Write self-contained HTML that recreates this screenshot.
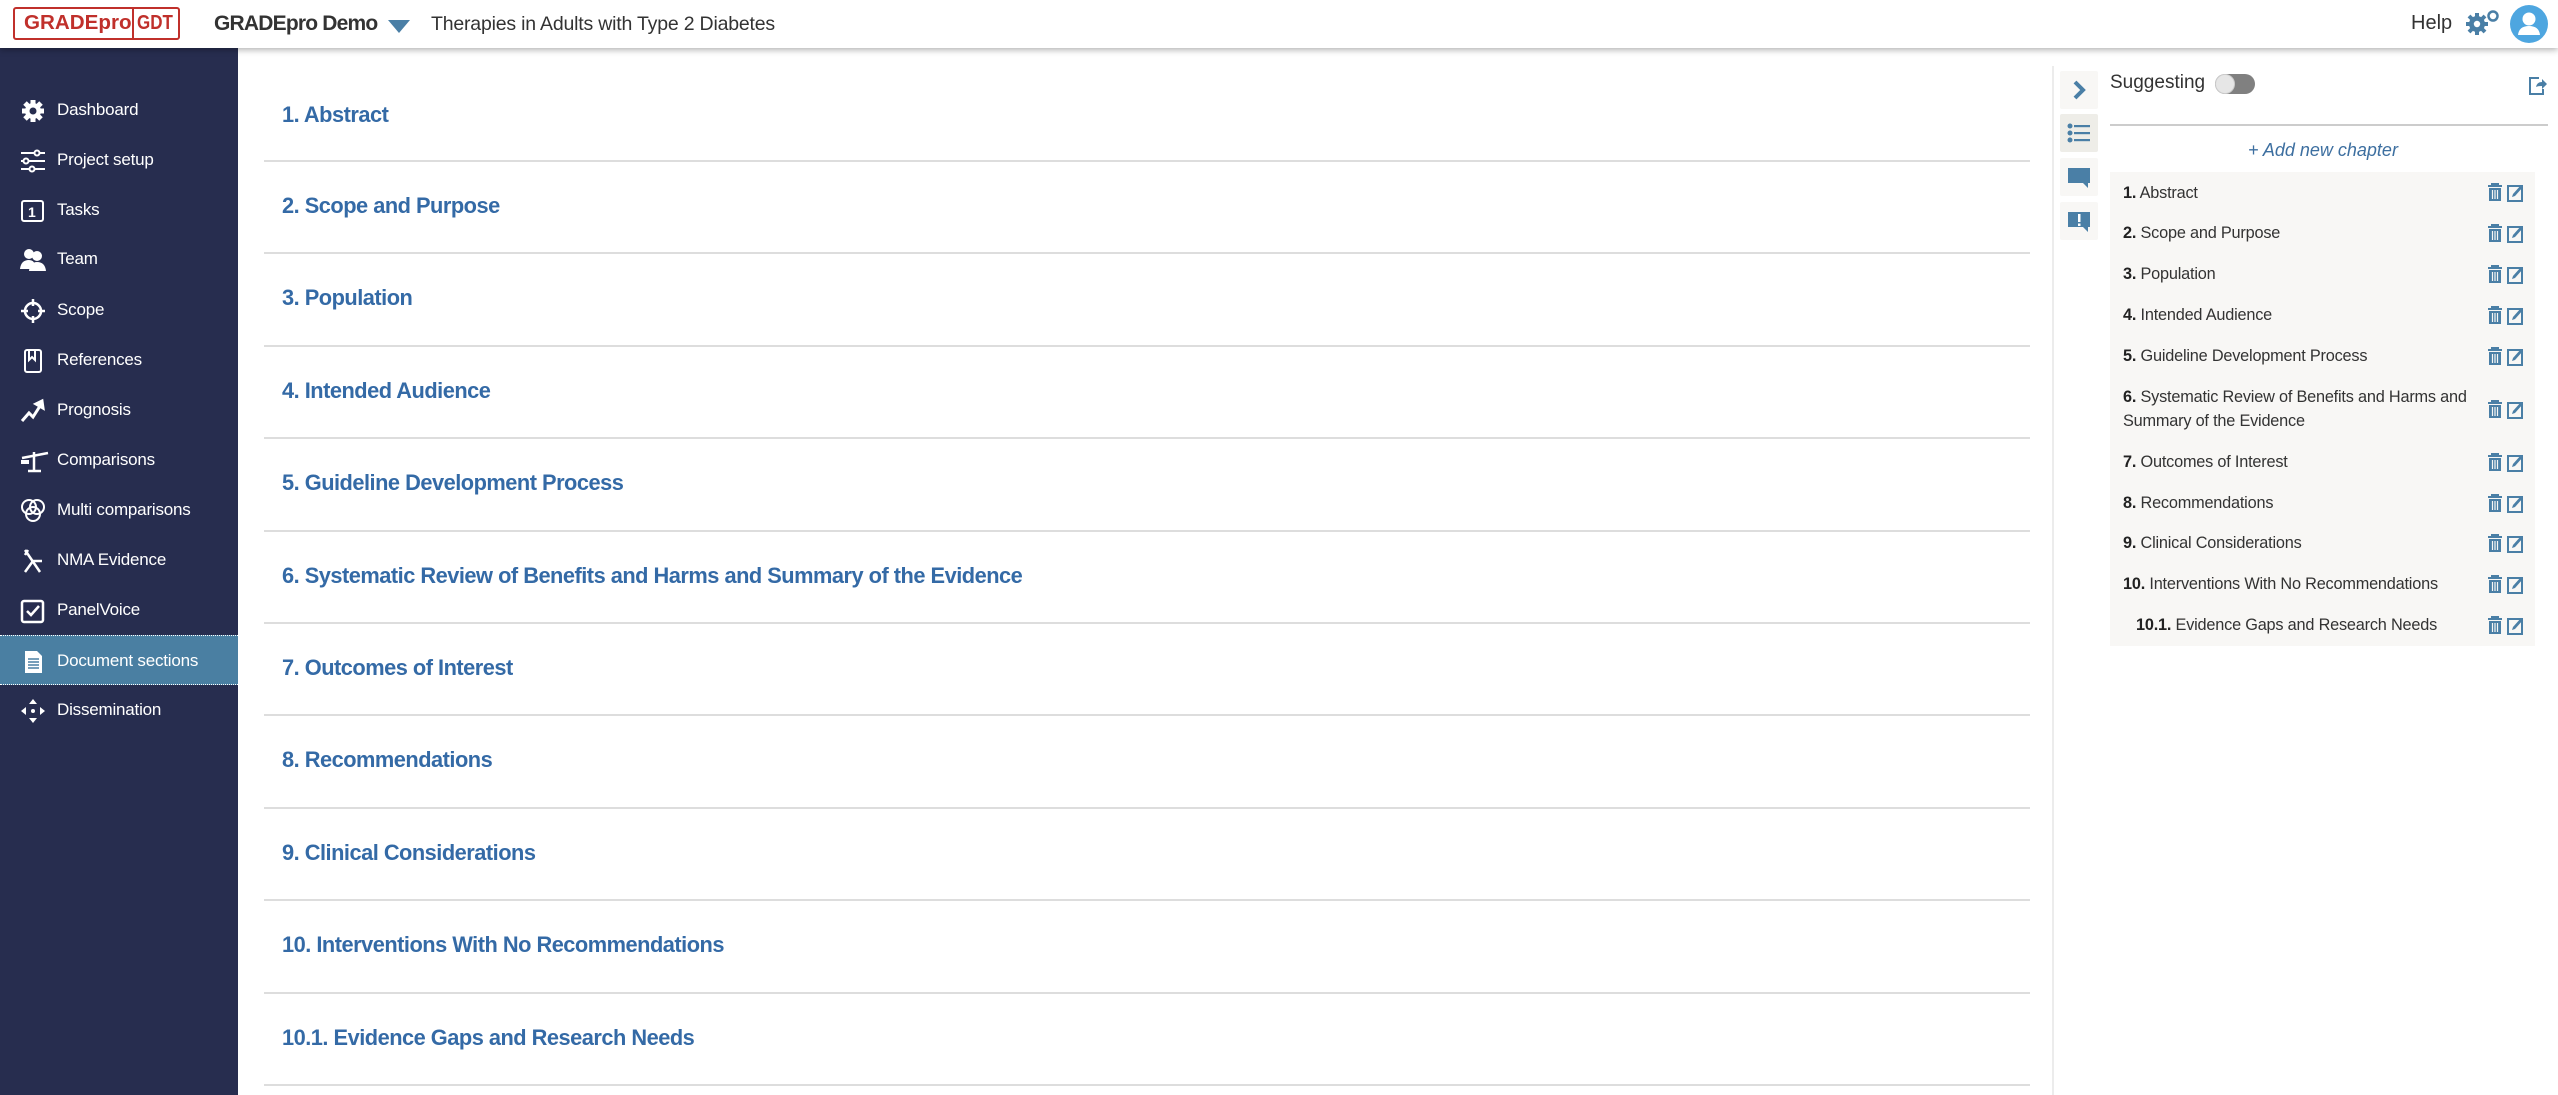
<!DOCTYPE html>
<html><head><meta charset="utf-8">
<style>
*{box-sizing:border-box;margin:0;padding:0}
html,body{width:2558px;height:1095px;overflow:hidden;background:#fff;font-family:"Liberation Sans",sans-serif}
#top{position:absolute;left:0;top:0;width:2558px;height:48px;background:#fff;box-shadow:0 2px 6px rgba(0,0,0,.3);z-index:5}
#logo{position:absolute;left:13px;top:7px;width:167px;height:33px;border:2px solid #c0302b;border-radius:3px;color:#c0302b;font-weight:bold;font-size:20px;line-height:29px;overflow:hidden}
#logo span{position:absolute;top:0;white-space:nowrap;transform-origin:0 0}
#logo .div{position:absolute;left:117px;top:0;width:2px;height:29px;background:#c0302b}
#proj{position:absolute;left:214px;top:12px;font-weight:bold;font-size:21px;color:#333;letter-spacing:-0.8px}
#tri{position:absolute;left:388px;top:20px;width:0;height:0;border-left:11px solid transparent;border-right:11px solid transparent;border-top:13px solid #4a7fa6}
#title{position:absolute;left:431px;top:13px;font-size:19.5px;color:#333;letter-spacing:-0.2px}
#help{position:absolute;left:2411px;top:12px;font-size:20px;color:#333}
#side{position:absolute;left:0;top:48px;width:238px;height:1047px;background:#272d4f}
.si{position:absolute;left:0;width:238px;height:50px;color:#fff;font-size:17px;letter-spacing:-0.2px}
.si .t{position:absolute;left:57px;top:15px}
.si svg{position:absolute;left:20px;top:13px}
.si.act{background:#4a7fa2;border-top:1px dotted #fff;border-bottom:1px dotted #fff}
.h{position:absolute;left:0;width:1766px;height:92.4px;border-bottom:2px solid #ddd}
.h span{position:absolute;left:18px;top:56px;font-weight:bold;font-size:21.8px;color:#346aa6;letter-spacing:-0.5px;white-space:nowrap}
#vline{position:absolute;left:2052px;top:66px;width:2px;height:1029px;background:#ececec}
.ib{position:absolute;left:2060px;width:38px;height:38px;background:#f8f7f5;border-radius:2px}
.ib svg{position:absolute;left:0;top:0}
#sug{position:absolute;left:2110px;top:72px;font-size:19px;color:#333}
#tog{position:absolute;left:2215px;top:74px;width:40px;height:20px;border-radius:10px;background:#808080}
#tog i{position:absolute;left:0;top:0;width:20px;height:20px;border-radius:10px;background:#e6e6e6;border:1px solid #ccc}
#hr{position:absolute;left:2110px;top:124px;width:438px;height:2px;background:#ccc}
#add{position:absolute;left:2248px;top:140px;font-size:18px;font-style:italic;color:#3d6fa0}
#list{position:absolute;left:2110px;top:172px;width:425px;height:474px;background:#f8f7f5}
.li{position:absolute;left:13px;font-size:16.3px;color:#333;line-height:24px;letter-spacing:-0.2px}
.li b{color:#222}
</style></head><body>
<div id="top">
 <div id="logo"><span style="left:9px;transform:scaleX(1.03)">GRADEpro</span><div class="div"></div><span style="left:122px;transform:scaleX(0.85)">GDT</span></div>
 <div id="proj">GRADEpro Demo</div>
 <div id="tri"></div>
 <div id="title">Therapies in Adults with Type 2 Diabetes</div>
 <div id="help">Help</div>
 <svg style="position:absolute;left:2465px;top:9px" width="36" height="26" viewBox="0 0 36 26">
  <g fill="#4a7fa6"><circle cx="12" cy="15" r="8"/>
  <g stroke="#4a7fa6" stroke-width="4"><line x1="12" y1="4" x2="12" y2="26"/><line x1="1" y1="15" x2="23" y2="15"/><line x1="4" y1="7" x2="20" y2="23"/><line x1="20" y1="7" x2="4" y2="23"/></g></g>
  <circle cx="12" cy="15" r="3.2" fill="#fff"/>
  <circle cx="28" cy="7" r="4.5" fill="none" stroke="#4a7fa6" stroke-width="2.5"/>
 </svg>
 <svg style="position:absolute;left:2510px;top:5px" width="38" height="38" viewBox="0 0 38 38">
  <circle cx="19" cy="19" r="19" fill="#4ea6e0"/>
  <circle cx="19" cy="14" r="6.5" fill="#fff"/>
  <path d="M8 30 Q9 21 19 21 Q29 21 30 30 Z" fill="#fff"/>
 </svg>
</div>

<div id="side">
 <div class="si" style="top:37px"><svg width="26" height="26" viewBox="0 0 26 26"><g stroke="#fff" stroke-width="5"><line x1="13" y1="2" x2="13" y2="24"/><line x1="2" y1="13" x2="24" y2="13"/><line x1="5" y1="5" x2="21" y2="21"/><line x1="21" y1="5" x2="5" y2="21"/></g><circle cx="13" cy="13" r="8" fill="#fff"/><circle cx="13" cy="13" r="3.5" fill="#272d4f"/></svg><span class="t">Dashboard</span></div>
 <div class="si" style="top:87px"><svg width="26" height="26" viewBox="0 0 26 26" stroke="#fff" stroke-width="2" fill="#272d4f"><line x1="1" y1="5" x2="25" y2="5"/><line x1="1" y1="13" x2="25" y2="13"/><line x1="1" y1="21" x2="25" y2="21"/><circle cx="17" cy="5" r="2.5"/><circle cx="6" cy="13" r="2.5"/><circle cx="12" cy="21" r="2.5"/></svg><span class="t">Project setup</span></div>
 <div class="si" style="top:137px"><svg width="26" height="26" viewBox="0 0 26 26"><rect x="2" y="3" width="21" height="20" fill="none" stroke="#fff" stroke-width="2" rx="2"/><text x="8" y="19" fill="#fff" font-size="14" font-weight="bold" font-family="Liberation Sans">1</text></svg><span class="t">Tasks</span></div>
 <div class="si" style="top:186px"><svg width="28" height="26" viewBox="0 0 28 26" fill="#fff"><circle cx="9" cy="7" r="5"/><circle cx="17" cy="9" r="5"/><path d="M0 22 Q1 13 9 13 Q14 13 15 18 L15 22Z"/><path d="M9 24 Q10 15 17 15 Q25 15 26 24Z"/></svg><span class="t">Team</span></div>
 <div class="si" style="top:237px"><svg width="26" height="26" viewBox="0 0 26 26" stroke="#fff" stroke-width="2.5" fill="none"><circle cx="13" cy="13" r="8"/><line x1="13" y1="1" x2="13" y2="8"/><line x1="13" y1="18" x2="13" y2="25"/><line x1="1" y1="13" x2="8" y2="13"/><line x1="18" y1="13" x2="25" y2="13"/></svg><span class="t">Scope</span></div>
 <div class="si" style="top:287px"><svg width="26" height="26" viewBox="0 0 26 26" stroke="#fff" stroke-width="2" fill="none"><rect x="5" y="2" width="16" height="22" rx="2"/><path d="M9 3 V12 L12 9 L15 12 V3"/></svg><span class="t">References</span></div>
 <div class="si" style="top:337px"><svg width="26" height="26" viewBox="0 0 26 26" stroke="#fff" stroke-width="3" fill="none"><path d="M2 23 L9 15 L13 19 L20 8"/><path d="M16 6 L22 3 L23 10Z" fill="#fff"/></svg><span class="t">Prognosis</span></div>
 <div class="si" style="top:387px"><svg width="30" height="26" viewBox="0 0 30 26" stroke="#fff" stroke-width="2.5" fill="none"><line x1="2" y1="10" x2="28" y2="5"/><line x1="14" y1="4" x2="14" y2="22"/><line x1="8" y1="23" x2="21" y2="23"/><path d="M1 14 L9 14" stroke-width="4"/></svg><span class="t">Comparisons</span></div>
 <div class="si" style="top:437px"><svg width="26" height="26" viewBox="0 0 26 26" stroke="#fff" stroke-width="2" fill="none"><circle cx="9" cy="9" r="7"/><circle cx="17" cy="9" r="7"/><circle cx="13" cy="16" r="7"/></svg><span class="t">Multi comparisons</span></div>
 <div class="si" style="top:487px"><svg width="26" height="26" viewBox="0 0 26 26" stroke="#fff" stroke-width="2.5" fill="none"><line x1="5" y1="2" x2="20" y2="24"/><line x1="13" y1="13" x2="5" y2="24"/><line x1="13" y1="13" x2="22" y2="13"/><line x1="8" y1="2" x2="5" y2="7"/></svg><span class="t">NMA Evidence</span></div>
 <div class="si" style="top:537px"><svg width="26" height="26" viewBox="0 0 26 26" stroke="#fff" stroke-width="2.5" fill="none"><rect x="2" y="3" width="21" height="21" rx="2"/><path d="M7 13 L11 17 L19 8"/></svg><span class="t">PanelVoice</span></div>
 <div class="si act" style="top:587px"><svg width="26" height="26" viewBox="0 0 26 26"><path d="M5 2 H17 L22 7 V24 H5Z" fill="#fff"/><g stroke="#4a7fa2" stroke-width="1.5"><line x1="8" y1="10" x2="19" y2="10"/><line x1="8" y1="13" x2="19" y2="13"/><line x1="8" y1="16" x2="19" y2="16"/><line x1="8" y1="19" x2="19" y2="19"/></g></svg><span class="t">Document sections</span></div>
 <div class="si" style="top:637px"><svg width="26" height="26" viewBox="0 0 26 26" fill="#fff"><path d="M13 1 L17 6 H9Z"/><path d="M13 25 L17 20 H9Z"/><path d="M1 13 L6 9 V17Z"/><path d="M25 13 L20 9 V17Z"/><circle cx="13" cy="13" r="2"/></svg><span class="t">Dissemination</span></div>
</div>

<div style="position:absolute;left:264px;top:48px;width:1766px">
 <div class="h" style="top:0;height:114px"><span style="top:54px">1. Abstract</span></div>
 <div class="h" style="top:114px"><span style="top:31px">2. Scope and Purpose</span></div>
 <div class="h" style="top:206.4px"><span style="top:31px">3. Population</span></div>
 <div class="h" style="top:298.8px"><span style="top:31px">4. Intended Audience</span></div>
 <div class="h" style="top:391.2px"><span style="top:31px">5. Guideline Development Process</span></div>
 <div class="h" style="top:483.6px"><span style="top:31px">6. Systematic Review of Benefits and Harms and Summary of the Evidence</span></div>
 <div class="h" style="top:576px"><span style="top:31px">7. Outcomes of Interest</span></div>
 <div class="h" style="top:668.4px"><span style="top:31px">8. Recommendations</span></div>
 <div class="h" style="top:760.8px"><span style="top:31px">9. Clinical Considerations</span></div>
 <div class="h" style="top:853.2px"><span style="top:31px">10. Interventions With No Recommendations</span></div>
 <div class="h" style="top:945.6px"><span style="top:31px">10.1. Evidence Gaps and Research Needs</span></div>
</div>

<div id="vline"></div>
<div class="ib" style="top:71px"><svg width="38" height="38"><path d="M15 11 L23 19 L15 27" stroke="#4a7fa6" stroke-width="4" fill="none"/></svg></div>
<div class="ib" style="top:114px;background:#eeede8"><svg width="38" height="38" fill="#4a7fa6"><circle cx="10" cy="12" r="2.5"/><circle cx="10" cy="19" r="2.5"/><circle cx="10" cy="26" r="2.5"/><rect x="14" y="11" width="16" height="2.2"/><rect x="14" y="18" width="16" height="2.2"/><rect x="14" y="25" width="16" height="2.2"/></svg></div>
<div class="ib" style="top:158px"><svg width="38" height="38" fill="#4a7fa6"><path d="M8 10 H30 V25 H28 V30 L23 25 H8Z"/></svg></div>
<div class="ib" style="top:202px"><svg width="38" height="38"><path d="M8 10 H30 V25 H28 V30 L23 25 H8Z" fill="#4a7fa6"/><rect x="18" y="12" width="2.5" height="8" fill="#fff"/><rect x="18" y="21.5" width="2.5" height="2.5" fill="#fff"/></svg></div>

<div id="sug">Suggesting</div>
<div id="tog"><i></i></div>
<svg style="position:absolute;left:2528px;top:76px" width="20" height="20" viewBox="0 0 20 20"><path d="M11 2 H2 V18 H15 V13" stroke="#4a7fa6" stroke-width="2" fill="none"/><path d="M8 11 Q9 6 14 6 V3 L19 8 L14 13 V10 Q10 10 8 11Z" fill="#4a7fa6"/></svg>
<div id="hr"></div>
<div id="add">+ Add new chapter</div>
<div id="list">
 <div class="li" style="top:9px"><b>1.</b> Abstract</div>
 <div class="li" style="top:49px"><b>2.</b> Scope and Purpose</div>
 <div class="li" style="top:90px"><b>3.</b> Population</div>
 <div class="li" style="top:131px"><b>4.</b> Intended Audience</div>
 <div class="li" style="top:172px"><b>5.</b> Guideline Development Process</div>
 <div class="li" style="top:213px"><b>6.</b> Systematic Review of Benefits and Harms and<br>Summary of the Evidence</div>
 <div class="li" style="top:278px"><b>7.</b> Outcomes of Interest</div>
 <div class="li" style="top:319px"><b>8.</b> Recommendations</div>
 <div class="li" style="top:359px"><b>9.</b> Clinical Considerations</div>
 <div class="li" style="top:400px"><b>10.</b> Interventions With No Recommendations</div>
 <div class="li" style="top:441px;left:26px"><b>10.1.</b> Evidence Gaps and Research Needs</div>
</div>
<svg style="position:absolute;left:0;top:0;pointer-events:none" width="2558" height="1095">
 <defs>
  <g id="ic">
   <path d="M1 2 H15 M5 2 V0 H11 V2" stroke="#4a7fa6" stroke-width="2" fill="none"/>
   <path d="M2 4 H14 V17 H2Z" fill="#4a7fa6"/>
   <path d="M5.5 6 V15 M8 6 V15 M10.5 6 V15" stroke="#f8f7f5" stroke-width="1.2"/>
   <rect x="21" y="2" width="14" height="15" fill="none" stroke="#4a7fa6" stroke-width="2"/>
   <path d="M25 13 L26 10 L34 1 L36 3 L28 12Z" fill="#4a7fa6"/>
  </g>
 </defs>
 <use href="#ic" x="2487" y="184"/>
 <use href="#ic" x="2487" y="225"/>
 <use href="#ic" x="2487" y="266"/>
 <use href="#ic" x="2487" y="307"/>
 <use href="#ic" x="2487" y="348"/>
 <use href="#ic" x="2487" y="401"/>
 <use href="#ic" x="2487" y="454"/>
 <use href="#ic" x="2487" y="495"/>
 <use href="#ic" x="2487" y="535"/>
 <use href="#ic" x="2487" y="576"/>
 <use href="#ic" x="2487" y="617"/>
</svg>
</body></html>
